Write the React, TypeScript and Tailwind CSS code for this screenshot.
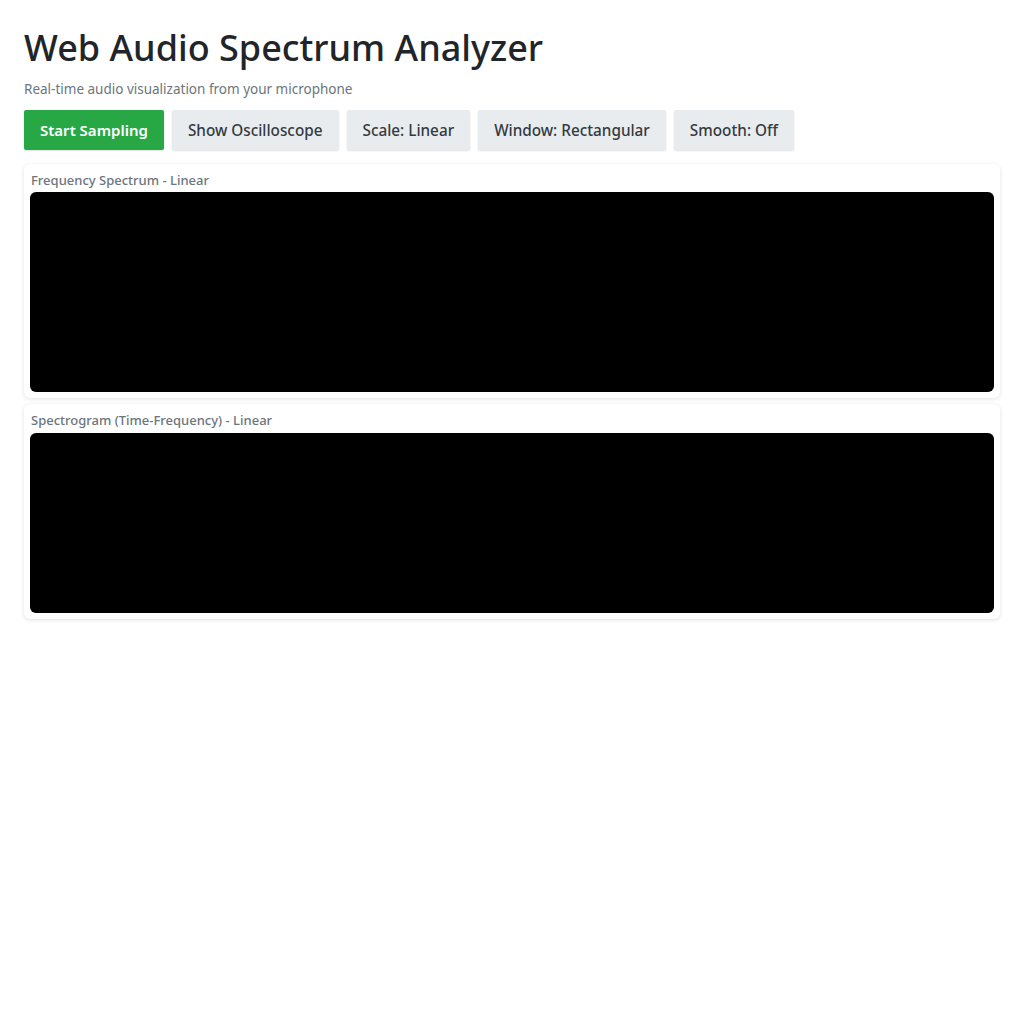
import React from "react";

const btn =
  "h-10 px-4 rounded-[2px] text-[15.3px] font-medium shadow-[0_1px_2px_rgba(0,0,0,0.12)]";

export default function App() {
  return (
    <div
      className="min-h-screen bg-white p-6 text-[#212529]"
      style={{ fontFamily: '"Noto Sans", "Open Sans", sans-serif' }}
    >
      <h1 className="mt-[2px] text-[36px] leading-[43px] font-medium">
        Web Audio Spectrum Analyzer
      </h1>
      <p className="mt-[11px] text-[13.5px] leading-[18px] text-[#6c757d]">
        Real-time audio visualization from your microphone
      </p>
      <div className="mt-[12px] flex gap-2">
        <button className={`${btn} bg-[#28a745] text-white !text-[15px] font-semibold`}>Start Sampling</button>
        <button className={`${btn} bg-[#e9ecef] text-[#343a40]`}>Show Oscilloscope</button>
        <button className={`${btn} bg-[#e9ecef] text-[#343a40]`}>Scale: Linear</button>
        <button className={`${btn} bg-[#e9ecef] text-[#343a40]`}>Window: Rectangular</button>
        <button className={`${btn} bg-[#e9ecef] text-[#343a40]`}>Smooth: Off</button>
      </div>
      <div className="mt-[14px] flex flex-col gap-[6px]">
        <div className="rounded-[6px] bg-white px-[6px] pb-[6px] pt-[8px] shadow-[0_1px_4px_rgba(0,0,0,0.12)]">
          <div className="ml-px text-[13px] leading-[16px] font-medium text-[#6c757d] mb-[4px]">
            Frequency Spectrum - Linear
          </div>
          <div className="h-[200px] rounded-[6px] bg-black" />
        </div>
        <div className="rounded-[6px] bg-white px-[6px] pb-[6px] pt-[8px] shadow-[0_1px_4px_rgba(0,0,0,0.12)]">
          <div className="ml-px text-[13px] leading-[16px] font-medium text-[#6c757d] mb-[5px]">
            Spectrogram (Time-Frequency) - Linear
          </div>
          <div className="h-[180px] rounded-[6px] bg-black" />
        </div>
      </div>
    </div>
  );
}
